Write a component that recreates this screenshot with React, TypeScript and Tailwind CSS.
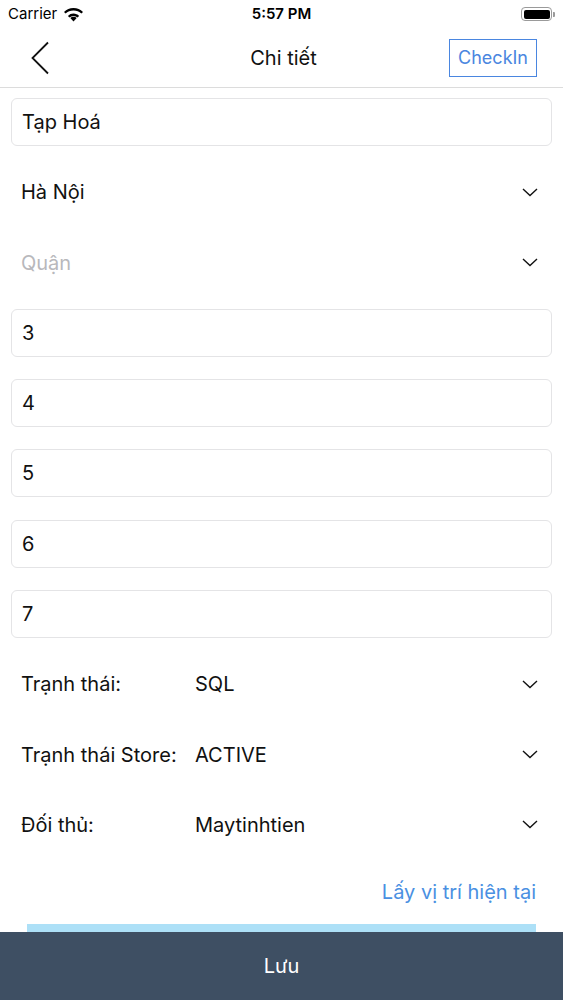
import { ChevronDown } from "lucide-react"

const font = { fontFamily: "Inter, 'Noto Sans', sans-serif" }

const inputs = ["3", "4", "5", "6", "7"]

const statusRows = [
  { label: "Trạnh thái:", value: "SQL" },
  { label: "Trạnh thái Store:", value: "ACTIVE" },
  { label: "Đối thủ:", value: "Maytinhtien" },
]

function Chevron() {
  return (
    <svg width="16" height="9" viewBox="0 0 16 9" fill="none" className="shrink-0">
      <path d="M1 1l7 6.5L15 1" stroke="#111" strokeWidth="1.4" />
    </svg>
  )
}

function TextBox({ value }: { value: string }) {
  return (
    <div className="h-[48px] shrink-0 flex items-center px-[10px] border border-[#e4e4e6] rounded-[6px] bg-white text-[20px] text-[#111]">
      {value}
    </div>
  )
}

function SelectRow({ children }: { children: React.ReactNode }) {
  return (
    <div className="h-[48px] shrink-0 flex items-center pl-[10px] pr-[14px] text-[20px]">
      <div className="flex-1 flex items-center">{children}</div>
      <Chevron />
    </div>
  )
}

export default function App() {
  return (
    <div className="w-[563px] h-[1000px] flex flex-col bg-white overflow-hidden" style={font}>
      {/* status bar */}
      <div className="h-[28px] shrink-0 flex items-center justify-between pl-[8px] pr-[8px] text-[15px] text-black">
        <div className="flex items-center gap-[6px] w-[120px]">
          <span>Carrier</span>
          <svg width="21" height="15" viewBox="0 0 21 15">
            <path d="M10.5 14.5L7.3 11a4.6 4.6 0 016.4 0z" fill="#000" />
            <path d="M10.5 6.6c2.2 0 4.2.9 5.6 2.3l-1.6 1.7a5.6 5.6 0 00-8 0L4.9 8.9a7.8 7.8 0 015.6-2.3z" fill="#000" />
            <path d="M10.5 1c3.7 0 7 1.5 9.5 3.9l-1.6 1.7A11.2 11.2 0 0010.5 3.4c-3.1 0-5.9 1.2-7.9 3.2L1 4.9A13.4 13.4 0 0110.5 1z" fill="#000" />
          </svg>
        </div>
        <span className="font-semibold">5:57 PM</span>
        <div className="w-[120px] flex justify-end items-center">
          <div className="w-[31px] h-[14px] rounded-[4px] border border-[#9a9a9a] p-[1.5px]">
            <div className="w-full h-full bg-black rounded-[2px]" />
          </div>
          <div className="w-[2px] h-[5px] bg-[#9a9a9a] rounded-r-[1px] ml-[1px]" />
        </div>
      </div>

      {/* nav bar */}
      <div className="h-[60px] shrink-0 flex items-center justify-between border-b border-[#dcdcdc] pl-[30px] pr-[26px]">
        <div className="w-[90px] flex">
          <svg width="20" height="34" viewBox="0 0 20 34" fill="none">
            <path d="M18 1.5L2.5 17 18 32.5" stroke="#111" strokeWidth="1.8" />
          </svg>
        </div>
        <div className="text-[20px] text-[#111]">Chi tiết</div>
        <div className="w-[90px] flex justify-end">
          <div className="h-[38px] px-[8px] flex items-center border-[1.5px] border-[#4a86e0] text-[18px] text-[#4a86e0]">
            CheckIn
          </div>
        </div>
      </div>

      {/* form */}
      <div className="flex-1 min-h-0 overflow-hidden px-[11px] pt-[10px] flex flex-col gap-[22.3px]">
        <TextBox value="Tạp Hoá" />
        <SelectRow>
          <span className="text-[#111]">Hà Nội</span>
        </SelectRow>
        <SelectRow>
          <span className="text-[#b8b8bc]">Quận</span>
        </SelectRow>
        {inputs.map((v) => (
          <TextBox key={v} value={v} />
        ))}
        {statusRows.map((r) => (
          <SelectRow key={r.label}>
            <span className="w-[174px] shrink-0 text-[#111]">{r.label}</span>
            <span className="text-[#111]">{r.value}</span>
          </SelectRow>
        ))}
        <div className="h-[48px] shrink-0 flex items-center justify-end pr-[16px] pb-[6px] text-[20px] text-[#4a90e2]">
          Lấy vị trí hiện tại
        </div>
        <div className="h-[48px] shrink-0 mx-[16px] -mt-[17.3px] bg-[#ade0f7]" />
      </div>

      {/* bottom bar */}
      <div className="h-[68px] shrink-0 flex items-center justify-center bg-[#3e4f63] text-[20px] text-white">
        Lưu
      </div>
    </div>
  )
}
